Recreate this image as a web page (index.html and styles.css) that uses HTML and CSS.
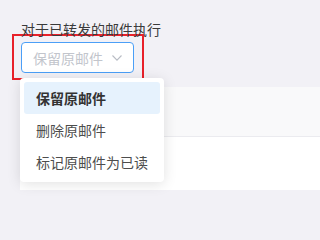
FILE: index.html
```html
<!DOCTYPE html>
<html lang="zh">
<head>
<meta charset="utf-8">
<link rel="stylesheet" href="styles.css">
</head>
<body>
<div class="page">
  <div class="label">对于已转发的邮件执行</div>
  <div class="mark">
    <div class="select">
      <span class="placeholder">保留原邮件</span>
      <svg class="chev" width="10" height="6" viewBox="0 0 10 6"><polyline points="0.5,0.5 5,5.2 9.5,0.5" fill="none" stroke="#b8bcc4" stroke-width="1.1"/></svg>
    </div>
  </div>
  <div class="table">
    <div class="thead"></div>
    <div class="trow"></div>
  </div>
  <ul class="menu">
    <li class="item active">保留原邮件</li>
    <li class="item">删除原邮件</li>
    <li class="item">标记原邮件为已读</li>
  </ul>
</div>
</body>
</html>
```
FILE: styles.css
```css
html, body {
  margin: 0;
  padding: 0;
}
body {
  background: #f2f1f6;
  font-family: "Noto Sans CJK SC", "Noto Sans", sans-serif;
  min-height: 227px;
  overflow: hidden;
}
.page {
  position: relative;
  padding-top: 23px;
}
.label {
  margin-left: 21px;
  font-size: 14px;
  line-height: 12px;
  height: 12px;
  color: #3a3a3a;
  white-space: nowrap;
}
.mark {
  margin-top: -1px;
  margin-left: 12px;
  width: 113px;
  border: 2px solid #e8212a;
  padding: 6px 8px 5px 7px;
}
.select {
  height: 29px;
  border: 1px solid #4b9ff7;
  border-radius: 4px;
  background: #fff;
  display: flex;
  align-items: center;
  padding-left: 11px;
  gap: 9px;
}
.placeholder {
  font-size: 14px;
  color: #c2c5cc;
  line-height: 16px;
}
.chev {
  display: block;
  margin-top: 1px;
}
.table {
  margin-top: 7px;
  margin-left: 20px;
  background: #fff;
}
.thead {
  height: 49px;
  background: #f9f9fa;
  border-bottom: 1px solid #ebebef;
}
.trow {
  height: 53px;
  background: #fff;
}
.menu {
  position: absolute;
  left: 20px;
  top: 78px;
  width: 136px;
  margin: 0;
  padding: 4px;
  list-style: none;
  background: #fff;
  border-radius: 4px;
  box-shadow: 0 2px 14px rgba(0, 0, 0, 0.12);
}
.item {
  height: 32px;
  line-height: 32px;
  padding-left: 12px;
  font-size: 14px;
  color: #4d4d4d;
  border-radius: 3px;
  white-space: nowrap;
}
.item.active {
  background: #e6f2fd;
  color: #333;
  font-weight: bold;
}
```
